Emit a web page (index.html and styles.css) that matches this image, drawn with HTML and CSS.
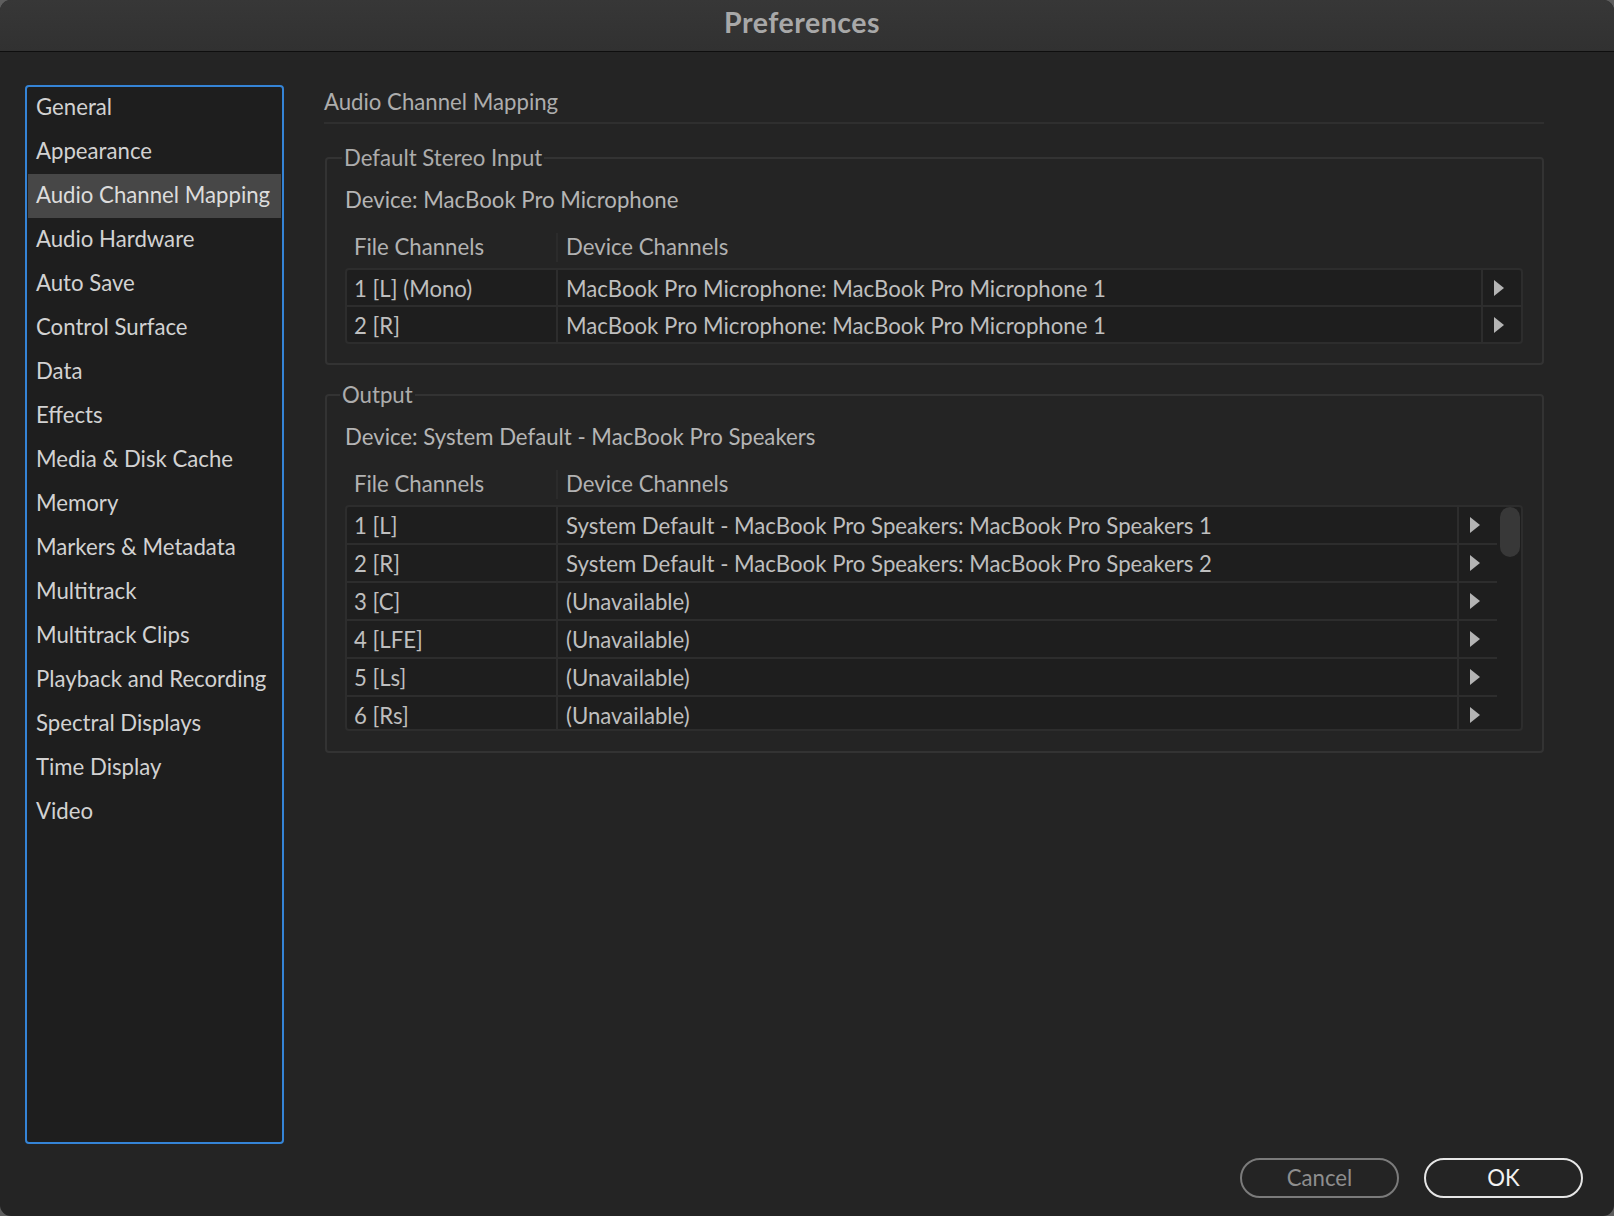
FILE: index.html
```html
<!DOCTYPE html>
<html lang="en">
<head>
<meta charset="utf-8">
<title>Preferences</title>
<link rel="stylesheet" href="styles.css">
</head>
<body>
<div class="window">
  <header class="titlebar"><span class="title">Preferences</span></header>
  <div class="main">
    <nav class="sidebar">
      <ul class="nav-list">
        <li class="nav-item">General</li>
        <li class="nav-item">Appearance</li>
        <li class="nav-item is-selected">Audio Channel Mapping</li>
        <li class="nav-item">Audio Hardware</li>
        <li class="nav-item">Auto Save</li>
        <li class="nav-item">Control Surface</li>
        <li class="nav-item">Data</li>
        <li class="nav-item">Effects</li>
        <li class="nav-item">Media &amp; Disk Cache</li>
        <li class="nav-item">Memory</li>
        <li class="nav-item">Markers &amp; Metadata</li>
        <li class="nav-item">Multitrack</li>
        <li class="nav-item">Multitrack Clips</li>
        <li class="nav-item">Playback and Recording</li>
        <li class="nav-item">Spectral Displays</li>
        <li class="nav-item">Time Display</li>
        <li class="nav-item">Video</li>
      </ul>
    </nav>
    <section class="content">
      <h2 class="section-title">Audio Channel Mapping</h2>

      <fieldset class="group">
        <legend class="group-legend">Default Stereo Input</legend>
        <div class="device">Device: MacBook Pro Microphone</div>
        <div class="table-head">
          <div class="th th-file">File Channels</div>
          <div class="th th-device">Device Channels</div>
        </div>
        <div class="table">
          <div class="rows">
            <div class="row">
              <div class="cell cell-file">1 [L] (Mono)</div>
              <div class="cell cell-device">MacBook Pro Microphone: MacBook Pro Microphone 1</div>
              <div class="cell cell-arrow"><svg class="arrow" width="10" height="16" viewBox="0 0 10 16"><polygon points="0,0 10,8 0,16"/></svg></div>
            </div>
            <div class="row">
              <div class="cell cell-file">2 [R]</div>
              <div class="cell cell-device">MacBook Pro Microphone: MacBook Pro Microphone 1</div>
              <div class="cell cell-arrow"><svg class="arrow" width="10" height="16" viewBox="0 0 10 16"><polygon points="0,0 10,8 0,16"/></svg></div>
            </div>
          </div>
        </div>
      </fieldset>

      <fieldset class="group group-output">
        <legend class="group-legend">Output</legend>
        <div class="device">Device: System Default - MacBook Pro Speakers</div>
        <div class="table-head">
          <div class="th th-file">File Channels</div>
          <div class="th th-device">Device Channels</div>
        </div>
        <div class="table table-scroll">
          <div class="rows rows-clip">
            <div class="row">
              <div class="cell cell-file">1 [L]</div>
              <div class="cell cell-device">System Default - MacBook Pro Speakers: MacBook Pro Speakers 1</div>
              <div class="cell cell-arrow"><svg class="arrow" width="10" height="16" viewBox="0 0 10 16"><polygon points="0,0 10,8 0,16"/></svg></div>
            </div>
            <div class="row">
              <div class="cell cell-file">2 [R]</div>
              <div class="cell cell-device">System Default - MacBook Pro Speakers: MacBook Pro Speakers 2</div>
              <div class="cell cell-arrow"><svg class="arrow" width="10" height="16" viewBox="0 0 10 16"><polygon points="0,0 10,8 0,16"/></svg></div>
            </div>
            <div class="row">
              <div class="cell cell-file">3 [C]</div>
              <div class="cell cell-device">(Unavailable)</div>
              <div class="cell cell-arrow"><svg class="arrow" width="10" height="16" viewBox="0 0 10 16"><polygon points="0,0 10,8 0,16"/></svg></div>
            </div>
            <div class="row">
              <div class="cell cell-file">4 [LFE]</div>
              <div class="cell cell-device">(Unavailable)</div>
              <div class="cell cell-arrow"><svg class="arrow" width="10" height="16" viewBox="0 0 10 16"><polygon points="0,0 10,8 0,16"/></svg></div>
            </div>
            <div class="row">
              <div class="cell cell-file">5 [Ls]</div>
              <div class="cell cell-device">(Unavailable)</div>
              <div class="cell cell-arrow"><svg class="arrow" width="10" height="16" viewBox="0 0 10 16"><polygon points="0,0 10,8 0,16"/></svg></div>
            </div>
            <div class="row">
              <div class="cell cell-file">6 [Rs]</div>
              <div class="cell cell-device">(Unavailable)</div>
              <div class="cell cell-arrow"><svg class="arrow" width="10" height="16" viewBox="0 0 10 16"><polygon points="0,0 10,8 0,16"/></svg></div>
            </div>
          </div>
          <div class="scroll-track"><div class="scroll-thumb"></div></div>
        </div>
      </fieldset>
    </section>
  </div>
  <footer class="footer">
    <button class="btn btn-cancel">Cancel</button>
    <button class="btn btn-ok">OK</button>
  </footer>
</div>
</body>
</html>
```

FILE: styles.css
```css
* { box-sizing: border-box; }

html, body {
  margin: 0;
  padding: 0;
  background: #5e5e5e;
}

body {
  font-family: "Lato", "Noto Sans", sans-serif;
  font-size: 22.2px;
}

.window {
  width: 1614px;
  height: 1216px;
  background: #242424;
  border-radius: 11px;
  overflow: hidden;
  display: flex;
  flex-direction: column;
}

.titlebar {
  height: 52px;
  flex: none;
  background: linear-gradient(#373737, #313131);
  border-bottom: 1px solid #0e0e0e;
  display: flex;
  justify-content: center;
  align-items: flex-start;
  padding: 6px 10px 0 0;
}

.title {
  color: #a8a8a8;
  font-weight: 700;
  font-size: 28.5px;
  line-height: 32px;
  letter-spacing: 0.5px;
}

.main {
  display: flex;
  align-items: flex-start;
  padding: 33px 0 0 25px;
  height: 1092px;
  flex: none;
}

.sidebar {
  width: 259px;
  height: 1059px;
  flex: none;
  background: #1e1e1e;
  border: 2px solid #3584d6;
  border-radius: 4px;
  padding: 0 1px 0 1px;
}

.nav-list {
  list-style: none;
  margin: -1px 0 0 0;
  padding: 0;
}

.nav-item {
  height: 44px;
  line-height: 42px;
  padding: 0 0 2px 8px;
  color: #d2d2d2;
  white-space: nowrap;
}

.nav-item.is-selected {
  background: #474747;
  color: #dcdcdc;
}

.content {
  width: 1220px;
  margin-left: 40px;
  flex: none;
}

.section-title {
  margin: 0;
  font-weight: 400;
  font-size: 22.2px;
  line-height: 28px;
  color: #adadad;
  padding: 3px 0 6px 0;
  border-bottom: 2px solid #2f2f2f;
}

.group {
  margin: 19px 0 0 1px;
  width: 1219px;
  border: 2px solid #333333;
  border-radius: 4px;
  padding: 14px 19px 19px 18px;
  min-width: 0;
}

.group-output {
  margin-top: 15px;
  padding-bottom: 20px;
}

.group-legend {
  padding: 1px 2px 0 2px;
  margin-left: -3px;
  line-height: 28px;
  color: #acacac;
}

.group-output .group-legend {
  margin-left: -5px;
}

.device {
  line-height: 28px;
  color: #b5b5b5;
}

.table-head {
  display: flex;
  height: 29px;
  margin-top: 19px;
  padding-left: 2px;
}

.th {
  line-height: 28px;
  color: #b2b2b2;
}

.th-file {
  width: 211px;
  padding-left: 7px;
  border-right: 2px solid #2b2b2b;
}

.th-device {
  padding-left: 8px;
}

.table {
  margin-top: 6px;
  background: #1e1e1e;
  border: 2px solid #2d2d2d;
  border-radius: 4px;
  display: flex;
}

.rows {
  flex: 1;
}

.rows-clip {
  height: 222px;
  overflow: hidden;
}

.row {
  display: grid;
  grid-template-columns: 211px 1fr 38px;
  height: 37px;
  border-bottom: 2px solid #2d2d2d;
}

.rows .row:last-child {
  border-bottom: none;
  height: 35px;
}

.rows-clip .row {
  height: 38px;
}

.rows-clip .row:last-child {
  height: 38px;
  border-bottom: 2px solid #2d2d2d;
}

.cell {
  display: flex;
  align-items: center;
  color: #bfbfbf;
  white-space: nowrap;
}

.cell-file {
  padding: 2px 0 0 7px;
  border-right: 2px solid #2d2d2d;
}

.cell-device {
  padding: 2px 0 0 8px;
  border-right: 2px solid #2d2d2d;
}

.rows-clip .cell-file,
.rows-clip .cell-device {
  padding-top: 0;
}

.cell-arrow {
  padding-left: 11px;
}

.arrow {
  display: block;
  fill: #b4b4b4;
}

.scroll-track {
  width: 24px;
  flex: none;
  padding: 0 1px 0 3px;
}

.scroll-thumb {
  width: 20px;
  height: 50px;
  border-radius: 10px;
  background: #383838;
}

.footer {
  display: flex;
  justify-content: flex-end;
  gap: 25px;
  padding: 14px 31px 0 0;
}

.btn {
  width: 159px;
  height: 40px;
  border-radius: 20px;
  background: transparent;
  font-family: "Lato", "Noto Sans", sans-serif;
  font-size: 22.2px;
  line-height: 36px;
  padding: 0;
  cursor: pointer;
}

.btn-cancel {
  border: 2px solid #7b7b7b;
  color: #8e8e8e;
}

.btn-ok {
  border: 2px solid #e6e6e6;
  color: #f2f2f2;
}
```
